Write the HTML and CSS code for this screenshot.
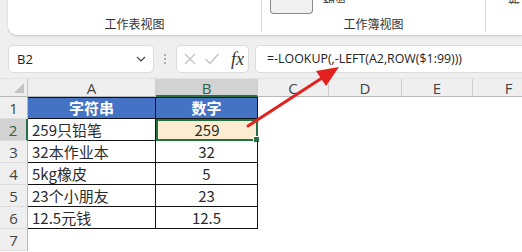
FILE: index.html
```html
<!DOCTYPE html>
<html lang="zh">
<head>
<meta charset="utf-8">
<title>LOOKUP 提取数字</title>
<link rel="stylesheet" href="styles.css">
</head>
<body>
<div class="ribbon">
  <div class="panel">
    <div class="group g1"><span class="glabel">工作表视图</span></div>
    <div class="group g2">
      <div class="btnrow"><span class="bigbtn"></span><span class="btntxt">预览</span></div>
      <span class="glabel">工作簿视图</span>
    </div>
    <div class="group g3"><span class="btntxt">新建</span></div>
  </div>
</div>

<div class="fbar">
  <div class="namebox">
    <span>B2</span>
    <svg width="10" height="6" viewBox="0 0 10 6"><path d="M1 1l4 4 4-4" fill="none" stroke="#444" stroke-width="1.2"/></svg>
  </div>
  <div class="grip"><i></i><i></i><i></i></div>
  <div class="fxbox">
    <svg width="14" height="14" viewBox="0 0 14 14"><path d="M2 2l10 10M12 2L2 12" stroke="#c2c2c2" stroke-width="1.3"/></svg>
    <svg width="16" height="14" viewBox="0 0 16 14"><path d="M1.5 7l4.5 4.5L14.5 2" fill="none" stroke="#c2c2c2" stroke-width="1.3"/></svg>
    <span class="fx">fx</span>
  </div>
  <div class="formula">=-LOOKUP(,-LEFT(A2,ROW($1:99)))</div>
</div>

<div class="grid">
  <div class="corner"></div>
  <div class="ch">A</div>
  <div class="ch sel">B</div>
  <div class="ch">C</div>
  <div class="ch">D</div>
  <div class="ch">E</div>
  <div class="ch">F</div>

  <div class="rh">1</div>
  <div class="c ca head top">字符串</div>
  <div class="c cb head top">数字</div>
  <div class="e"></div><div class="e"></div><div class="e"></div><div class="e"></div>

  <div class="rh sel">2</div>
  <div class="c ca">259只铅笔</div>
  <div class="c cb active">259<span class="handle"></span></div>
  <div class="e"></div><div class="e"></div><div class="e"></div><div class="e"></div>

  <div class="rh">3</div>
  <div class="c ca">32本作业本</div>
  <div class="c cb">32</div>
  <div class="e"></div><div class="e"></div><div class="e"></div><div class="e"></div>

  <div class="rh">4</div>
  <div class="c ca">5kg橡皮</div>
  <div class="c cb">5</div>
  <div class="e"></div><div class="e"></div><div class="e"></div><div class="e"></div>

  <div class="rh">5</div>
  <div class="c ca">23个小朋友</div>
  <div class="c cb">23</div>
  <div class="e"></div><div class="e"></div><div class="e"></div><div class="e"></div>

  <div class="rh">6</div>
  <div class="c ca">12.5元钱</div>
  <div class="c cb">12.5</div>
  <div class="e"></div><div class="e"></div><div class="e"></div><div class="e"></div>

  <div class="rh">7</div>
  <div class="e"></div><div class="e"></div><div class="e"></div><div class="e"></div><div class="e"></div><div class="e"></div>
</div>

<svg class="arrow" width="522" height="252" viewBox="0 0 522 252">
  <line x1="248" y1="126" x2="322" y2="78" stroke="#e3211f" stroke-width="3" stroke-linecap="round"/>
  <polygon points="339,67 316,71 326,86" fill="#e3211f"/>
</svg>
</body>
</html>
```

FILE: styles.css
```css
body {
  margin: 0;
  width: 522px;
  height: 252px;
  overflow: hidden;
  background: #fff;
  font-family: "Noto Sans CJK SC", "Open Sans", sans-serif;
  position: relative;
}

/* ribbon */
.ribbon {
  background: #efefef;
  height: 40px;
}
.panel {
  margin-left: 8px;
  height: 35px;
  background: #fff;
  border-radius: 0 0 0 9px;
  box-shadow: 0 1px 2px rgba(0,0,0,0.18);
  display: flex;
}
.group {
  position: relative;
  height: 32px;
  border-right: 1px solid #dadada;
  display: flex;
  flex-direction: column;
  justify-content: flex-end;
  align-items: center;
}
.g1 { width: 253px; }
.g2 { width: 223px; }
.g3 { flex: 1; border-right: none; align-items: flex-start; justify-content: flex-start; padding-left: 22px; }
.glabel {
  font-size: 12px;
  line-height: 14px;
  color: #333;
  margin-bottom: 1px;
}
.btnrow {
  display: flex;
  align-self: flex-start;
  margin-left: 8px;
  margin-bottom: 3px;
}
.bigbtn {
  width: 41px;
  height: 14px;
  border: 1px solid #8a8a8a;
  border-top: none;
  border-radius: 0 0 4px 4px;
  background: #f0f0f0;
}
.btntxt {
  font-size: 12px;
  line-height: 8px;
  height: 4px;
  overflow: hidden;
  margin-left: 10px;
  color: #333;
}
.g3 .btntxt { margin-left: 0; }

/* formula bar */
.fbar {
  background: #efefef;
  height: 39px;
  display: flex;
  align-items: flex-start;
  padding-top: 5px;
  box-sizing: border-box;
  border-bottom: 1px solid #e2e2e2;
}
.namebox {
  margin-left: 8px;
  width: 146px;
  height: 28px;
  box-sizing: border-box;
  background: #fff;
  border: 1px solid #dcdcdc;
  border-radius: 5px;
  display: flex;
  align-items: center;
  justify-content: space-between;
  padding: 0 7px 0 8px;
  font-family: "Open Sans", sans-serif;
  font-size: 13px;
  color: #222;
}
.grip {
  width: 22px;
  height: 28px;
  display: flex;
  flex-direction: column;
  align-items: center;
  justify-content: center;
  gap: 2px;
}
.grip i {
  width: 2px;
  height: 2px;
  background: #999;
  border-radius: 1px;
}
.fxbox {
  width: 73px;
  height: 28px;
  box-sizing: border-box;
  background: #fff;
  border: 1px solid #dcdcdc;
  border-radius: 5px;
  display: flex;
  align-items: center;
  gap: 7px;
  padding-left: 6px;
}
.fx {
  font-family: "Liberation Serif", serif;
  font-style: italic;
  font-size: 18px;
  color: #333;
  margin-left: 4px;
}
.formula {
  margin-left: 6px;
  flex: 1;
  height: 28px;
  box-sizing: border-box;
  background: #fff;
  border: 1px solid #dcdcdc;
  border-right: none;
  border-radius: 5px 0 0 5px;
  padding-left: 11px;
  font-family: "Open Sans", sans-serif;
  font-size: 12.4px;
  line-height: 25px;
  color: #222;
  white-space: nowrap;
}

/* sheet */
.grid {
  display: grid;
  grid-template-columns: 28px 128px 102px 71px 73px 71px 72px;
  grid-template-rows: 18px repeat(7, 22px);
  font-size: 15px;
}
.grid > div { box-sizing: border-box; }
.corner {
  background: #efefef;
  border-right: 1px solid #c6c6c6;
  border-bottom: 1px solid #b8b8b8;
  position: relative;
}
.corner::after {
  content: "";
  position: absolute;
  right: 3px;
  bottom: 3px;
  border-left: 10px solid transparent;
  border-bottom: 10px solid #c4c4c4;
}
.ch {
  background: #efefef;
  border-right: 1px solid #cfcfcf;
  border-bottom: 1px solid #b8b8b8;
  color: #444;
  text-align: center;
  line-height: 18px;
  font-family: "Open Sans", sans-serif;
}
.ch.sel {
  background: #d2d2d2;
  border-bottom: 2px solid #217346;
  color: #2f5f45;
}
.rh {
  background: #efefef;
  border-right: 1px solid #b8b8b8;
  border-bottom: 1px solid #dedede;
  color: #444;
  text-align: center;
  line-height: 22px;
  font-family: "Open Sans", sans-serif;
}
.rh.sel {
  background: #d2d2d2;
  border-right: 2px solid #217346;
  color: #2f5f45;
}
.c {
  border-right: 1px solid #111;
  border-bottom: 1px solid #111;
  line-height: 21px;
  color: #2a2a2a;
  white-space: nowrap;
  position: relative;
}
.ca { padding-left: 4px; }
.cb { text-align: center; }
.top { border-top: 1px solid #111; line-height: 19px; }
.head {
  background: #4472c4;
  color: #fff;
  font-weight: bold;
  text-align: center;
  padding-left: 0;
}
.active {
  background: #fcecd0;
  border: 2px solid #217346;
  line-height: 18px;
}
.handle {
  position: absolute;
  right: -4px;
  bottom: -4px;
  width: 5px;
  height: 5px;
  background: #217346;
  border: 1px solid #fff;
}
.arrow {
  position: absolute;
  left: 0;
  top: 0;
  pointer-events: none;
}
```
